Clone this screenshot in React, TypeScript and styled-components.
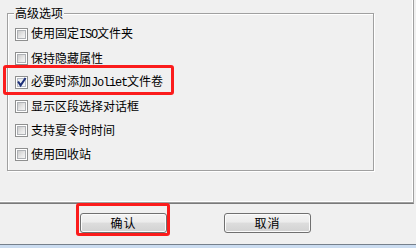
import React from "react";
import styled, { createGlobalStyle } from "styled-components";

const GlobalStyle = createGlobalStyle`
  html, body {
    margin: 0;
    padding: 0;
    background: #f0f0f0;
  }
  body {
    font-family: "Noto Sans CJK SC", "Noto Sans", sans-serif;
    font-size: 12px;
    color: #000;
  }
`;

const Page = styled.div`
  width: 416px;
  height: 248px;
  display: flex;
  flex-direction: column;
  background: #f0f0f0;
  overflow: hidden;
`;

const Panel = styled.div`
  box-sizing: border-box;
  width: 414px;
  height: 204px;
  flex: none;
  border-right: 1px solid #a0a0a0;
  border-bottom: 1px solid #7a7a7a;
  box-shadow: inset 0 -1px 0 #a0a0a0, inset -1px -2px 0 #ffffff;
  padding: 13px 0 0 7px;
`;

const GroupBox = styled.div`
  position: relative;
  box-sizing: border-box;
  width: 367px;
  border: 1px solid #a0a0a0;
  box-shadow: inset 1px 1px 0 #ffffff, 1px 1px 0 #ffffff;
  padding: 8px 0 4px 7px;
  display: flex;
  flex-direction: column;
`;

const Legend = styled.span`
  position: absolute;
  top: -8px;
  left: 6px;
  padding: 0 1px;
  line-height: 14px;
  background: #f0f0f0;
  white-space: nowrap;
`;

const Row = styled.label`
  position: relative;
  height: 24px;
  display: flex;
  align-items: center;
  gap: 3px;
  white-space: nowrap;
`;

const Box = styled.span`
  box-sizing: border-box;
  width: 13px;
  height: 13px;
  flex: none;
  border: 1px solid #8e8f8f;
  background: #ffffff;
  padding: 1px;
  display: flex;
`;

const BoxFill = styled.span<{ $checked?: boolean }>`
  position: relative;
  flex: 1;
  border: 1px solid ${(p) => (p.$checked ? "#b6bcc6" : "#aeb1b5")};
  background: ${(p) =>
    p.$checked
      ? "linear-gradient(135deg, #e6e9ee 0%, #f6f7f9 100%)"
      : "linear-gradient(135deg, #cbcbcb 0%, #e8e8e8 60%, #f4f4f4 100%)"};
`;

const Check = styled.svg`
  position: absolute;
  left: -2px;
  top: -2px;
  width: 11px;
  height: 11px;
`;

const Label = styled.span`
  line-height: 14px;
`;

const Latin = styled.span<{ $spacing: number }>`
  font-family: "Liberation Mono", "DejaVu Sans Mono", monospace;
  font-size: 12px;
  letter-spacing: ${(p) => p.$spacing}px;
`;

const Highlight = styled.span<{
  $left: number;
  $top: number;
  $w: number;
  $h: number;
}>`
  position: absolute;
  left: ${(p) => p.$left}px;
  top: ${(p) => p.$top}px;
  width: ${(p) => p.$w}px;
  height: ${(p) => p.$h}px;
  box-sizing: border-box;
  border: 3px solid #fb1c1c;
  border-radius: 3px;
  pointer-events: none;
`;

const ButtonBar = styled.div`
  flex: none;
  height: 40px;
  box-sizing: border-box;
  padding: 9px 0 0 80px;
  display: flex;
  align-items: flex-start;
  gap: 57px;
`;

const ButtonWrap = styled.div`
  position: relative;
`;

const Button = styled.button`
  box-sizing: border-box;
  width: 87px;
  height: 20px;
  padding: 0;
  margin: 0;
  border: 1px solid #707070;
  border-radius: 3px;
  background: linear-gradient(
    to bottom,
    #f3f3f3 0%,
    #ececec 45%,
    #dddddd 50%,
    #d2d2d2 100%
  );
  box-shadow: inset 0 0 0 1px #fbfbfb;
  font-family: "Noto Sans CJK SC", "Noto Sans", sans-serif;
  font-size: 12px;
  line-height: 16px;
  color: #000;
  letter-spacing: 1px;
`;

const WindowEdge = styled.div`
  flex: 1;
  border-top: 1px solid #76808c;
  background: #cbdcf0;
`;

type Option = {
  pre: string;
  latin?: string;
  post?: string;
  checked?: boolean;
  highlight?: boolean;
};

const options: Option[] = [
  { pre: "使用固定", latin: "ISO", post: "文件夹" },
  { pre: "保持隐藏属性" },
  {
    pre: "必要时添加",
    latin: "Joliet",
    post: "文件卷",
    checked: true,
    highlight: true,
  },
  { pre: "显示区段选择对话框" },
  { pre: "支持夏令时时间" },
  { pre: "使用回收站" },
];

function CheckBox({ checked }: { checked?: boolean }) {
  return (
    <Box>
      <BoxFill $checked={checked}>
        {checked && (
          <Check viewBox="0 0 11 11">
            <path
              d="M2.6 5.4 L4.6 8.4 L9 1.8"
              fill="none"
              stroke="#1c2f78"
              strokeWidth="2"
              strokeLinecap="square"
              strokeLinejoin="miter"
            />
          </Check>
        )}
      </BoxFill>
    </Box>
  );
}

export default function App() {
  return (
    <Page>
      <GlobalStyle />
      <Panel>
        <GroupBox>
          <Legend>高级选项</Legend>
          {options.map((o, i) => (
            <Row key={i}>
              {o.highlight && <Highlight $left={-12} $top={-5} $w={171} $h={30} />}
              <CheckBox checked={o.checked} />
              <Label>
                {o.pre}
                {o.latin && <Latin $spacing={-1.2}>{o.latin}</Latin>}
                {o.post}
              </Label>
            </Row>
          ))}
        </GroupBox>
      </Panel>
      <ButtonBar>
        <ButtonWrap>
          <Highlight $left={-4} $top={-10} $w={94} $h={33} />
          <Button>确认</Button>
        </ButtonWrap>
        <ButtonWrap>
          <Button>取消</Button>
        </ButtonWrap>
      </ButtonBar>
      <WindowEdge />
    </Page>
  );
}
